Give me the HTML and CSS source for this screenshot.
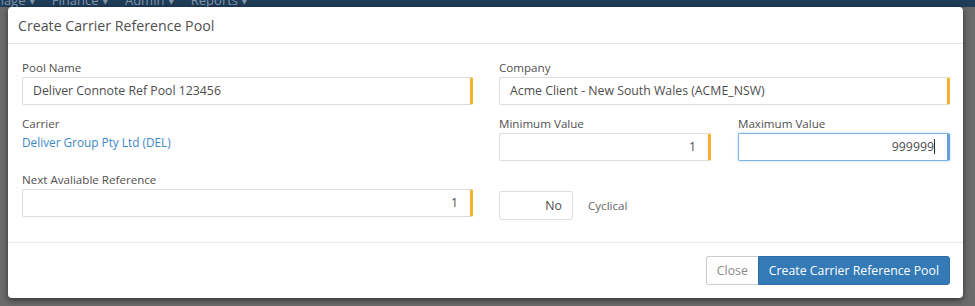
FILE: index.html
```html
<!DOCTYPE html>
<html>

<head>
  <title>Create Carrier Reference Pool</title>
  <meta charset="UTF-8">
  <link rel="stylesheet" href="styles.css">
</head>

<body>
  <div class="navbar">
    <span class="navItem firstItem">Manage &#9662;</span>
    <span class="navItem">Finance &#9662;</span>
    <span class="navItem">Admin &#9662;</span>
    <span class="navItem">Reports &#9662;</span>
  </div>
  <div class="modal">
    <div class="modalHeader">
      <h4 class="modalTitle">Create Carrier Reference Pool</h4>
    </div>
    <div class="modalBody">
      <div class="column">
        <div class="formGroup">
          <label class="fieldLabel">Pool Name</label>
          <div class="field required">Deliver Connote Ref Pool 123456</div>
        </div>
        <div class="formGroup carrierGroup">
          <label class="fieldLabel">Carrier</label>
          <a class="carrierLink" href="#">Deliver Group Pty Ltd (DEL)</a>
        </div>
        <div class="formGroup">
          <label class="fieldLabel">Next Avaliable Reference</label>
          <div class="field required alignRight">1</div>
        </div>
      </div>
      <div class="column">
        <div class="formGroup">
          <label class="fieldLabel">Company</label>
          <div class="field required">Acme Client - New South Wales (ACME_NSW)</div>
        </div>
        <div class="formGroup splitRow">
          <div>
            <label class="fieldLabel">Minimum Value</label>
            <div class="field required alignRight">1</div>
          </div>
          <div>
            <label class="fieldLabel">Maximum Value</label>
            <div class="field focused alignRight">999999<span class="caret"></span></div>
          </div>
        </div>
        <div class="toggleRow">
          <div class="toggleBox">No</div>
          <span class="toggleLabel">Cyclical</span>
        </div>
      </div>
    </div>
    <div class="modalFooter">
      <div class="btnGroup">
        <button class="btn btnDefault">Close</button>
        <button class="btn btnPrimary">Create Carrier Reference Pool</button>
      </div>
    </div>
  </div>
</body>

</html>
```

FILE: styles.css
```css
html, body {
  margin: 0;
  padding: 0;
}
body {
  width: 975px;
  height: 306px;
  overflow: hidden;
  background-color: #6b6b6b;
  font-family: "Open Sans", "Noto Sans", sans-serif;
  font-size: 13px;
  color: #555555;
}
.navbar {
  height: 7px;
  background-color: #1f3c58;
  overflow: hidden;
  display: flex;
  gap: 16px;
  font-size: 13px;
  line-height: 8px;
  color: #8194a8;
  white-space: nowrap;
}
.navItem {
  margin-top: -4px;
}
.firstItem {
  margin-left: -23px;
}
.modal {
  margin-left: 8px;
  width: 955px;
  background-color: #ffffff;
  border-radius: 4px;
  box-shadow: 0 2px 6px rgba(0, 0, 0, 0.55);
}
.modalHeader {
  height: 36px;
  border-bottom: 1px solid #e8e8e8;
  padding: 0 10px;
  display: flex;
  align-items: center;
}
.modalTitle {
  margin: 0;
  font-size: 14.2px;
  font-weight: normal;
  color: #505050;
}
.modalBody {
  height: 183px;
  padding: 15px 13px 0 14px;
  display: grid;
  grid-template-columns: 1fr 1fr;
  column-gap: 26px;
}
.formGroup {
  margin-bottom: 10px;
}
.fieldLabel {
  display: block;
  height: 18px;
  line-height: 18px;
  font-size: 11.6px;
  color: #505050;
}
.field {
  box-sizing: border-box;
  height: 28px;
  line-height: 26px;
  padding: 0 12px 0 10px;
  border: 1px solid #dddddd;
  border-radius: 2px;
  font-size: 12.3px;
  color: #4d4d4d;
  white-space: nowrap;
}
.required {
  border-right: 3px solid #f2b12f;
}
.focused {
  border-color: #7fb5e6;
  border-right: 3px solid #5f9fdb;
  box-shadow: 0 0 3px rgba(102, 175, 233, 0.5);
}
.alignRight {
  text-align: right;
}
.caret {
  display: inline-block;
  width: 1px;
  height: 15px;
  background-color: #333333;
  vertical-align: -3px;
}
.carrierGroup {
  height: 46px;
}
.carrierLink {
  display: block;
  line-height: 18px;
  font-size: 11.8px;
  color: #3d87c6;
  text-decoration: none;
}
.splitRow {
  display: grid;
  grid-template-columns: 1fr 1fr;
  column-gap: 27px;
}
.toggleRow {
  margin-top: 30px;
  display: flex;
  align-items: center;
  gap: 15px;
}
.toggleBox {
  box-sizing: border-box;
  width: 74px;
  height: 29px;
  line-height: 27px;
  padding-right: 10px;
  text-align: right;
  font-size: 12.3px;
  color: #4d4d4d;
  border: 1px solid #dddddd;
  border-radius: 3px;
}
.toggleLabel {
  font-size: 11.6px;
  color: #666666;
}
.modalFooter {
  border-top: 1px solid #e8e8e8;
  padding: 13px 13px 13px 14px;
  display: flex;
  justify-content: flex-end;
}
.btnGroup {
  display: flex;
}
.btn {
  height: 29px;
  font-family: "Open Sans", "Noto Sans", sans-serif;
  font-size: 12.3px;
  padding: 0 10px;
  cursor: pointer;
}
.btnDefault {
  color: #8a8a8a;
  background-color: #ffffff;
  border: 1px solid #cccccc;
  border-right: none;
  border-radius: 3px 0 0 3px;
}
.btnPrimary {
  color: #ffffff;
  background-color: #337ab7;
  border: 1px solid #2e6da4;
  border-radius: 0 3px 3px 0;
}
```
